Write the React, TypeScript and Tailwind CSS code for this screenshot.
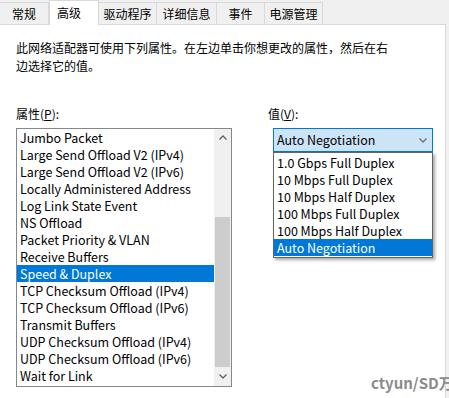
import { useState } from "react";

const FONT = { fontFamily: '"Noto Sans CJK SC", "Noto Sans", sans-serif' };

const tabs = ["常规", "高级", "驱动程序", "详细信息", "事件", "电源管理"];
const tabWidths = ["w-[49px]", "w-[50px]", "w-[58px]", "w-[60px]", "w-[48px]", "w-[58px]"];

const properties = [
  "Jumbo Packet",
  "Large Send Offload V2 (IPv4)",
  "Large Send Offload V2 (IPv6)",
  "Locally Administered Address",
  "Log Link State Event",
  "NS Offload",
  "Packet Priority & VLAN",
  "Receive Buffers",
  "Speed & Duplex",
  "TCP Checksum Offload (IPv4)",
  "TCP Checksum Offload (IPv6)",
  "Transmit Buffers",
  "UDP Checksum Offload (IPv4)",
  "UDP Checksum Offload (IPv6)",
  "Wait for Link",
];

const values = [
  "1.0 Gbps Full Duplex",
  "10 Mbps Full Duplex",
  "10 Mbps Half Duplex",
  "100 Mbps Full Duplex",
  "100 Mbps Half Duplex",
  "Auto Negotiation",
];

function Chevron({ up, className }: { up?: boolean; className?: string }) {
  return (
    <svg width="8" height="5" viewBox="0 0 8 5" className={className}>
      <polyline
        points={up ? "0.5,4.5 4,1 7.5,4.5" : "0.5,0.5 4,4 7.5,0.5"}
        fill="none"
        stroke="currentColor"
        strokeWidth="1.3"
      />
    </svg>
  );
}

export default function App() {
  const [selected, setSelected] = useState(8);
  const [value, setValue] = useState(5);

  return (
    <div
      className="relative w-[449px] h-[398px] overflow-hidden bg-[#f0f0f0] text-black"
      style={FONT}
    >
      {/* tab strip */}
      <div className="flex h-[24px] items-end text-[12px]">
        {tabs.map((t, i) =>
          i === 1 ? (
            <div
              key={t}
              className={`${tabWidths[i]} h-[25px] -mb-px z-10 bg-white border-x border-t border-[#d9d9d9] pl-[7px] pt-[3px] leading-[18px]`}
            >
              {t}
            </div>
          ) : (
            <div
              key={t}
              className={`${tabWidths[i]} h-[22px] bg-[#f0f0f0] border-r border-t border-[#d9d9d9] flex justify-center items-center leading-[18px]`}
            >
              {t}
            </div>
          )
        )}
      </div>

      {/* page */}
      <div className="w-[446px] h-[374px] bg-white border-t border-r border-[#d9d9d9] pl-4 pt-[14px]">
        <p className="text-[12px] leading-[18px] w-[380px]">
          此网络适配器可使用下列属性。在左边单击你想更改的属性，然后在右边选择它的值。
        </p>

        <div className="flex mt-[30px]">
          {/* properties */}
          <div className="w-[216px] flex flex-col">
            <div className="text-[12px] leading-[18px] mb-[5px]">
              属性(<span className="underline">P</span>):
            </div>
            <div className="flex h-[259px] border border-[#828790] bg-white">
              <ul className="flex-1 text-[12.5px]">
                {properties.map((p, i) => (
                  <li
                    key={p}
                    onClick={() => setSelected(i)}
                    className={`h-[17px] leading-[17px] pl-[3px] whitespace-nowrap ${
                      i === selected ? "bg-[#0078d7] text-white" : ""
                    }`}
                  >
                    {p}
                  </li>
                ))}
              </ul>
              <div className="w-[17px] flex flex-col bg-[#f0f0f0] text-[#606060]">
                <div className="h-[17px] flex items-center justify-center">
                  <Chevron up />
                </div>
                <div className="h-[71px]" />
                <div className="h-[150px] mx-px bg-[#cdcdcd]" />
                <div className="flex-1 flex items-center justify-center">
                  <Chevron />
                </div>
              </div>
            </div>
          </div>

          {/* value */}
          <div className="relative ml-[36px] w-[165px]">
            <div className="text-[12px] leading-[18px] mb-[5px]">
              值(<span className="underline">V</span>):
            </div>
            <div className="ml-[5px] w-[160px] h-[24px] flex items-center justify-between border border-[#0078d7] bg-[#cce4f7] pl-[3px] pr-[5px] text-[12.5px]">
              <span>{values[value]}</span>
              <Chevron className="text-[#707070]" />
            </div>
            <ul className="absolute left-[5px] top-[47px] w-[160px] border border-[#646464] bg-white py-px text-[12.5px] shadow-[2px_2px_3px_rgba(0,0,0,0.35)]">
              {values.map((v, i) => (
                <li
                  key={v}
                  onClick={() => setValue(i)}
                  className={`h-[17px] leading-[17px] pl-[3px] whitespace-nowrap ${
                    i === value ? "bg-[#0078d7] text-white" : ""
                  }`}
                >
                  {v}
                </li>
              ))}
            </ul>
          </div>
        </div>
      </div>

      {/* watermark */}
      <div className="absolute left-[371px] top-[372px] text-[15px] font-semibold text-[#8c8c8c] whitespace-nowrap">
        ctyun/SD万
      </div>
    </div>
  );
}
